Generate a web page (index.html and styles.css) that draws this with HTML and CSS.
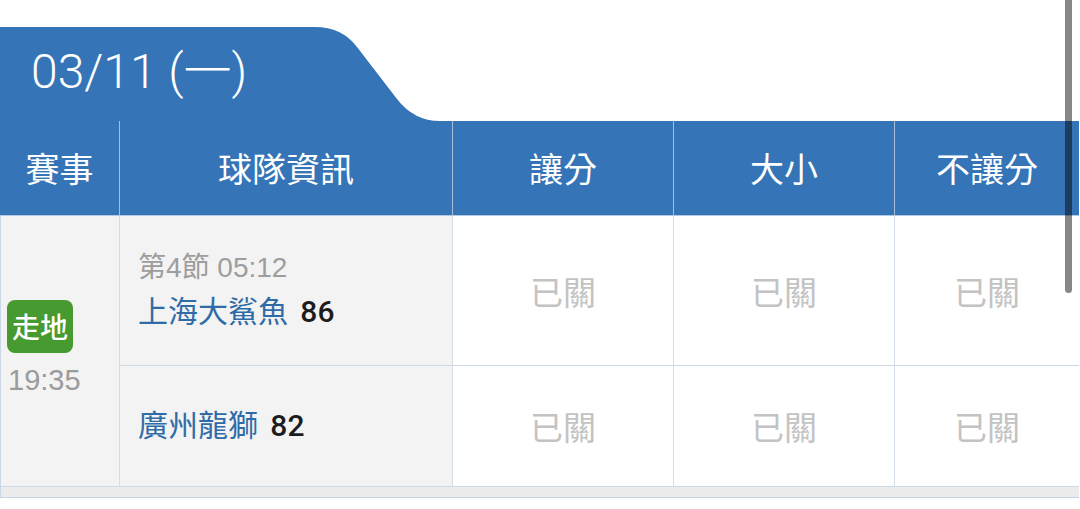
FILE: index.html
```html
<!DOCTYPE html>
<html lang="zh-Hant">
<head>
<meta charset="utf-8">
<title>賽事</title>
<link rel="stylesheet" href="styles.css">
</head>
<body>
<div class="page">
  <div class="tabbar">
    <div class="tab">
      <div class="tab-label">03/11 (一)</div>
      <svg class="tab-slope" width="125" height="94" viewBox="0 0 125 94" aria-hidden="true">
        <path d="M0,0 Q27,0 42,20 L82,72 Q99,94 125,94 L0,94 Z" fill="#3574b6"/>
      </svg>
    </div>
  </div>

  <div class="table">
    <div class="thead">
      <div class="th">賽事</div>
      <div class="th">球隊資訊</div>
      <div class="th">讓分</div>
      <div class="th">大小</div>
      <div class="th">不讓分</div>
    </div>
    <div class="tbody">
      <div class="cell event">
        <span class="badge">走地</span>
        <span class="time">19:35</span>
      </div>
      <div class="cell team team-first">
        <div class="period">第4節 05:12</div>
        <div class="team-line"><span class="team-name">上海大鯊魚</span> <span class="score">86</span></div>
      </div>
      <div class="cell odds">已關</div>
      <div class="cell odds">已關</div>
      <div class="cell odds">已關</div>
      <div class="cell team">
        <div class="team-line"><span class="team-name">廣州龍獅</span> <span class="score">82</span></div>
      </div>
      <div class="cell odds">已關</div>
      <div class="cell odds">已關</div>
      <div class="cell odds">已關</div>
    </div>
    <div class="strip"></div>
  </div>

  <div class="scrollbar"></div>
</div>
</body>
</html>
```

FILE: styles.css
```css
* { box-sizing: border-box; }

html, body {
  margin: 0;
  padding: 0;
  background: #ffffff;
}

body {
  font-family: "Liberation Sans", "Noto Sans CJK TC", sans-serif;
  width: 1080px;
  height: 509px;
  overflow: hidden;
}

.page {
  position: relative;
  width: 1080px;
  height: 509px;
}

.tabbar {
  padding-top: 27px;
  height: 121px;
}

.tab {
  display: flex;
  height: 94px;
}

.tab-label {
  width: 315px;
  height: 94px;
  background: #3574b6;
  color: #ffffff;
  font-family: "Roboto", "Noto Sans CJK TC", sans-serif;
  font-weight: 300;
  font-size: 48px;
  line-height: 90px;
  padding-left: 31px;
  white-space: nowrap;
}

.tab-slope {
  display: block;
  flex: none;
}

.table {
  width: 1079px;
}

.thead {
  display: grid;
  grid-template-columns: 120px 333px 221px 221px 184px;
  height: 95px;
  background: #3574b6;
  border-bottom: 1px solid #b3c9e0;
}

.th {
  display: flex;
  align-items: center;
  justify-content: center;
  color: #ffffff;
  font-size: 34px;
  border-right: 1px solid #a7bfda;
  padding-bottom: 1px;
}

.th:last-child { border-right: none; }

.tbody {
  display: grid;
  grid-template-columns: 120px 333px 221px 221px 184px;
  grid-template-rows: 150px 121px;
}

.cell {
  border-right: 1px solid #d3dde8;
  border-bottom: 1px solid #cbd8e6;
}

.cell:nth-child(5),
.cell:nth-child(9) { border-right: none; }

.event {
  grid-row: span 2;
  background: #f3f3f3;
  border-left: 1px solid #c9d7e6;
  display: flex;
  flex-direction: column;
  justify-content: center;
  align-items: flex-start;
  padding-left: 6px;
  padding-bottom: 6px;
}

.badge {
  display: flex;
  align-items: center;
  justify-content: center;
  width: 66px;
  height: 53px;
  border-radius: 8px;
  background: #469a2f;
  color: #ffffff;
  font-family: "Noto Sans CJK TC", sans-serif;
  font-size: 28px;
  font-weight: 500;
  line-height: 1;
}

.time {
  margin-top: 10px;
  margin-left: 1px;
  color: #9b9b9b;
  font-size: 29px;
  line-height: 34px;
}

.team {
  background: #f3f3f3;
  display: flex;
  flex-direction: column;
  justify-content: center;
  padding-left: 18px;
}

.period {
  color: #9d9d9d;
  font-size: 28px;
  line-height: 36px;
  margin-bottom: 6px;
  white-space: nowrap;
}

.team-line {
  font-size: 30px;
  line-height: 40px;
  white-space: nowrap;
}

.team-name { color: #2f6ca7; }

.score {
  color: #1c1c1c;
  font-family: "Roboto", "Liberation Sans", sans-serif;
  font-weight: 500;
  font-size: 30px;
  margin-left: 4px;
}

.odds {
  background: #ffffff;
  display: flex;
  align-items: center;
  justify-content: center;
  color: #c3c3c3;
  font-size: 33px;
}

.strip {
  height: 11px;
  background: #ececec;
  border-left: 1px solid #c9d7e6;
  border-bottom: 1px solid #c3d5e8;
}

.scrollbar {
  position: absolute;
  top: 0;
  left: 1065px;
  width: 7px;
  height: 293px;
  border-radius: 0 0 4px 4px;
  background: rgba(0, 0, 0, 0.47);
}
```
